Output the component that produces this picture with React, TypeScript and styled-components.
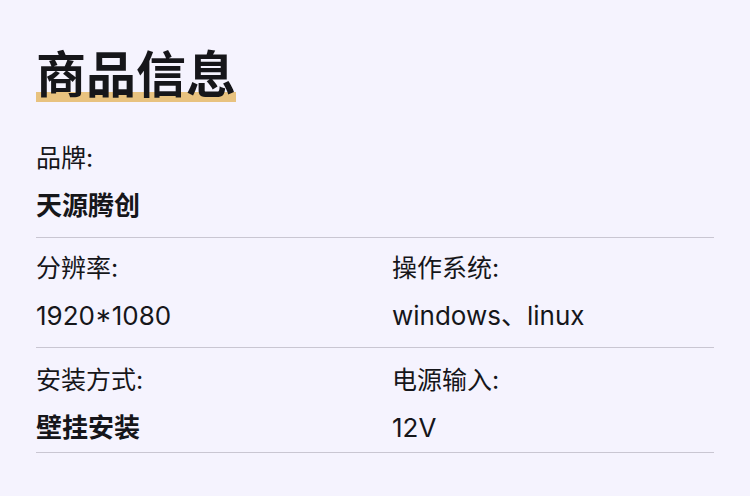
import React from "react";
import styled, { createGlobalStyle } from "styled-components";

const GlobalStyle = createGlobalStyle`
  html, body {
    margin: 0;
    padding: 0;
    background: #f5f3fe;
  }
  body {
    font-family: Inter, "Noto Sans CJK SC", sans-serif;
    color: #16161a;
  }
`;

const Page = styled.main`
  width: 750px;
  height: 496px;
  box-sizing: border-box;
  padding: 43px 36px 0;
`;

const Title = styled.h1`
  margin: 0 0 21px;
  font-size: 50px;
  font-weight: 700;
  line-height: 64px;
  text-decoration-line: underline;
  text-decoration-color: #e8c27f;
  text-decoration-thickness: 10px;
  text-underline-offset: -1px;
  text-decoration-skip-ink: all;
`;

const Row = styled.section<{ $cols: number }>`
  display: grid;
  grid-template-columns: ${(p) => (p.$cols === 2 ? "356px 1fr" : "1fr")};
  border-bottom: 1px solid #c9c6d2;
  padding: 14px 0 15px;

  &:last-child {
    padding-top: 16px;
    padding-bottom: 8px;
  }
`;

const Field = styled.div`
  display: flex;
  flex-direction: column;
  gap: 15px;
`;

const Label = styled.div`
  font-size: 25px;
  line-height: 32px;
`;

const Value = styled.div<{ $bold?: boolean }>`
  font-size: 26px;
  line-height: 33px;
  font-weight: ${(p) => (p.$bold ? 700 : 400)};
`;

type Item = { label: string; value: string; bold?: boolean };

const rows: Item[][] = [
  [{ label: "品牌:", value: "天源腾创", bold: true }],
  [
    { label: "分辨率:", value: "1920*1080" },
    { label: "操作系统:", value: "windows、linux" },
  ],
  [
    { label: "安装方式:", value: "壁挂安装", bold: true },
    { label: "电源输入:", value: "12V" },
  ],
];

export default function App() {
  return (
    <>
      <GlobalStyle />
      <Page>
        <Title>商品信息</Title>
        {rows.map((row, i) => (
          <Row key={i} $cols={row.length}>
            {row.map((item) => (
              <Field key={item.label}>
                <Label>{item.label}</Label>
                <Value $bold={item.bold}>{item.value}</Value>
              </Field>
            ))}
          </Row>
        ))}
      </Page>
    </>
  );
}
